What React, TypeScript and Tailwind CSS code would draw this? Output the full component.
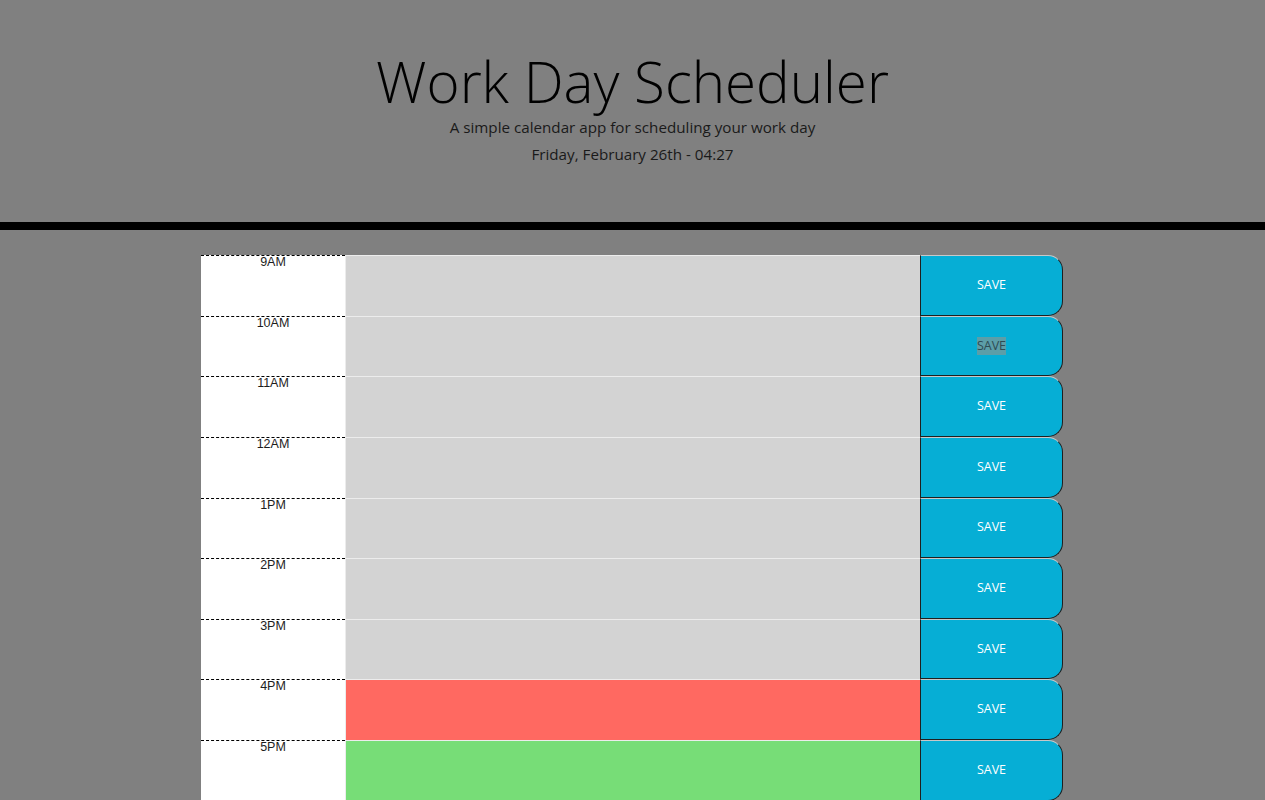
import React from 'react';

type Slot = { label: string; state: 'past' | 'present' | 'future' };

const slots: Slot[] = [
  { label: '9AM', state: 'past' },
  { label: '10AM', state: 'past' },
  { label: '11AM', state: 'past' },
  { label: '12AM', state: 'past' },
  { label: '1PM', state: 'past' },
  { label: '2PM', state: 'past' },
  { label: '3PM', state: 'past' },
  { label: '4PM', state: 'present' },
  { label: '5PM', state: 'future' },
];

const stateBg = {
  past: 'bg-[#d3d3d3]',
  present: 'bg-[#ff6961]',
  future: 'bg-[#77dd77]',
};

function HourRow({ slot, selected }: { slot: Slot; selected?: boolean }) {
  return (
    <div className="flex h-[60.625px] shrink-0">
      <div className="w-[144px] shrink-0 bg-white border-t border-dashed border-black text-center font-['Liberation_Sans',Arial,sans-serif] text-[12.5px] leading-[13px] text-[#1d1d1d]">
        {slot.label}
      </div>
      <textarea
        className={`flex-1 resize-none border-t border-l border-[#ececec] outline-none ${stateBg[slot.state]}`}
      />
      <button
        type="button"
        className="w-[143px] shrink-0 bg-[#06aed5] rounded-r-[15px] border border-[#1f1f1f] border-t-[#c8c8c8] flex items-center justify-center text-[12.5px] text-white"
      >
        {selected ? <span className="bg-[#5c9ea8] text-[#2e4b53]">SAVE</span> : 'SAVE'}
      </button>
    </div>
  );
}

export default function App() {
  return (
    <div className="h-[800px] overflow-hidden bg-[#808080] font-['Open_Sans',sans-serif]">
      <header className="h-[230px] border-b-[8px] border-black pt-[50px] text-center">
        <h1 className="text-[56.5px] font-light leading-[64px] text-black">Work Day Scheduler</h1>
        <p className="mt-[1px] text-[15.2px] leading-6 text-[#1a1a1a]">A simple calendar app for scheduling your work day</p>
        <p className="mt-[3px] text-[15.2px] leading-6 text-[#1a1a1a]">Friday, February 26th - 04:27</p>
      </header>
      <div className="mt-[25px] ml-[201px] w-[862px] flex flex-col">
        {slots.map((s, i) => (
          <HourRow key={s.label} slot={s} selected={i === 1} />
        ))}
      </div>
    </div>
  );
}
